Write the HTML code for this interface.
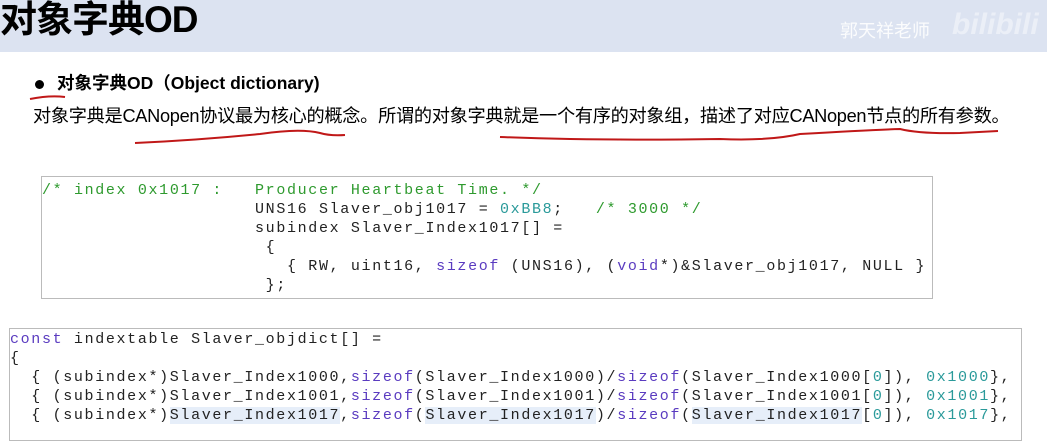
<!DOCTYPE html>
<html><head><meta charset="utf-8"><style>
body{margin:0;width:1047px;height:432px;overflow:hidden;background:#fff;position:relative;font-family:"Liberation Sans","Noto Sans CJK SC",sans-serif}
.hdr{position:absolute;left:0;top:0;width:1047px;height:52px;background:#dce3f1}
.title{position:absolute;left:0;top:-1px;font-size:37px;font-weight:bold;line-height:42px;color:#000;letter-spacing:-1px}
.wm{position:absolute;left:840px;top:17px;font-size:18px;color:#fff;opacity:.9}
.wm2{position:absolute;left:952px;top:8px;font-size:30px;font-weight:bold;color:#fff;opacity:.45;font-style:italic}
.b{position:absolute;left:36px;top:71px;font-size:17.5px;font-weight:bold;line-height:24px}
.dot{position:absolute;left:35px;top:80px;width:9px;height:9px;border-radius:50%;background:#000}
.p{position:absolute;left:33px;top:104px;font-size:18.2px;line-height:24px;letter-spacing:-0.3px}
pre{margin:0;position:absolute;font-family:"Liberation Mono",monospace;font-size:15px;line-height:19px;letter-spacing:1.65px;color:#222;border:1px solid #bbb;background:#fff}
.g{color:#2e9a2e}.k{color:#5a3bc0}.n{color:#2a9a9a}.h{background:#e6eef9}
</style></head><body>
<div class="hdr"></div>
<div class="title">对象字典OD</div>
<div class="wm">郭天祥老师</div>
<div class="wm2">bilibili</div>
<div class="dot"></div>
<div class="b" style="left:57px">对象字典OD（Object dictionary)</div>
<div class="p">对象字典是CANopen协议最为核心的概念。所谓的对象字典就是一个有序的对象组，描述了对应CANopen节点的所有参数。</div>
<svg style="position:absolute;left:0;top:0" width="1047" height="432"><g fill="none" stroke="#c01818" stroke-width="2"><path d="M30 99 Q50 95 65 97"/><path d="M135 143 Q200 140 260 134 Q300 128 320 133 Q330 136 345 135"/><path d="M500 137 Q600 141 720 139 Q770 141 800 134 Q870 130 900 129 Q920 134 960 133 L998 131"/></g>
<polygon points="905,432 922,416 916,432" fill="#1a2a5a"/></svg>
<pre style="left:41px;top:176px;width:890px;height:117px;padding:4px 0 0 0"><span class="g">/* index 0x1017 :   Producer Heartbeat Time. */</span>
                    UNS16 Slaver_obj1017 = <span class="n">0xBB8</span>;   <span class="g">/* 3000 */</span>
                    subindex Slaver_Index1017[] =
                     {
                       { RW, uint16, <span class="k">sizeof</span> (UNS16), (<span class="k">void</span>*)&amp;Slaver_obj1017, NULL }
                     };</pre>
<pre style="left:9px;top:328px;width:1011px;height:110px;padding:1px 0 0 0"><span class="k">const</span> indextable Slaver_objdict[] =
{
  { (subindex*)Slaver_Index1000,<span class="k">sizeof</span>(Slaver_Index1000)/<span class="k">sizeof</span>(Slaver_Index1000[<span class="n">0</span>]), <span class="n">0x1000</span>},
  { (subindex*)Slaver_Index1001,<span class="k">sizeof</span>(Slaver_Index1001)/<span class="k">sizeof</span>(Slaver_Index1001[<span class="n">0</span>]), <span class="n">0x1001</span>},
  { (subindex*)<span class="h">Slaver_Index1017</span>,<span class="k">sizeof</span>(<span class="h">Slaver_Index1017</span>)/<span class="k">sizeof</span>(<span class="h">Slaver_Index1017</span>[<span class="n">0</span>]), <span class="n">0x1017</span>},</pre>
</body></html>
